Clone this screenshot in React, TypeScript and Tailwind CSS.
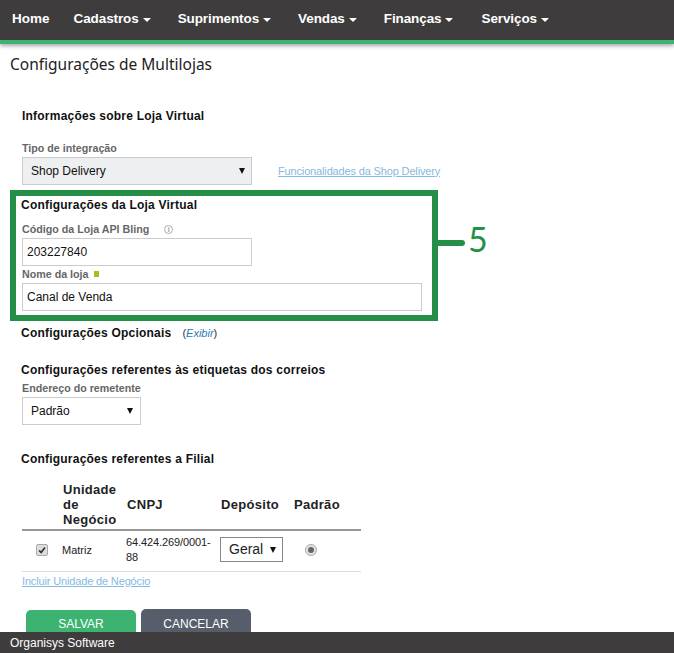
import type { ReactNode } from "react";

const sans = "font-['Liberation_Sans',Arial,sans-serif]";

function Caret() {
  return <span className="ml-[4px] inline-block h-0 w-0 border-x-[4px] border-t-[4px] border-x-transparent border-t-white align-middle" />;
}

function NavItem({ label, className }: { label: string; className: string }) {
  return (
    <span className={`text-[13.5px] font-bold tracking-[-0.1px] text-white whitespace-nowrap ${className}`}>
      {label}
      <Caret />
    </span>
  );
}

function SectionTitle({ children, className = "" }: { children: ReactNode; className?: string }) {
  return <h3 className={`text-[12px] font-bold text-[#111] tracking-[0.22px] leading-[16px] ${className}`}>{children}</h3>;
}

function FieldLabel({ children }: { children: ReactNode }) {
  return <div className="text-[10.7px] font-bold text-[#666] leading-[14px]">{children}</div>;
}

function Arrow() {
  return <span className="h-0 w-0 border-x-[3.5px] border-t-[6px] border-x-transparent border-t-[#111]" />;
}

export default function App() {
  return (
    <div className={`flex h-[653px] w-[674px] flex-col overflow-hidden bg-white ${sans}`}>
      <nav className="z-10 flex h-[44px] shrink-0 items-center border-b-[4px] border-[#3cb371] bg-[#3e3c3d] pb-[1px] pl-[12px] shadow-[0_2px_4px_rgba(0,0,0,0.35)]">
        <span className="mr-[24px] text-[13.5px] font-bold text-white">Home</span>
        <NavItem label="Cadastros" className="mr-[27px]" />
        <NavItem label="Suprimentos" className="mr-[27px]" />
        <NavItem label="Vendas" className="mr-[27px]" />
        <NavItem label="Finanças" className="mr-[28px]" />
        <NavItem label="Serviços" className="" />
      </nav>

      <main className="relative min-h-0 flex-1 overflow-hidden">
        <h1 className="ml-[10px] mt-[10px] font-['Noto_Sans',sans-serif] text-[15.5px] leading-[20px] text-[#222]">
          Configurações de Multilojas
        </h1>

        <div className="ml-[22px] mt-[34px]">
          <SectionTitle>Informações sobre Loja Virtual</SectionTitle>

          <div className="mt-[17px]">
            <FieldLabel>Tipo de integração</FieldLabel>
          </div>
          <div className="mt-[2px] flex items-center">
            <div className="flex h-[28px] w-[230px] items-center justify-between border border-[#ccc] bg-[#eeeff0] pl-[8px] pr-[6px] text-[12px] text-[#111]">
              Shop Delivery
              <Arrow />
            </div>
            <a className="ml-[26px] text-[11px] tracking-[-0.15px] text-[#85b9e0] underline">Funcionalidades da Shop Delivery</a>
          </div>

          <SectionTitle className="-ml-[1px] mt-[12px]">Configurações da Loja Virtual</SectionTitle>

          <div className="mt-[9px] flex items-center">
            <FieldLabel>Código da Loja API Bling</FieldLabel>
            <span className="ml-[15px] flex h-[9px] w-[9px] items-center justify-center rounded-full border border-[#aaa] text-[7px] font-bold leading-none text-[#999]">i</span>
          </div>
          <div className="mt-[2px] flex h-[28px] w-[230px] items-center border border-[#ccc] pl-[4px] text-[12px] text-[#111]">203227840</div>

          <div className="mt-[1px] flex items-center">
            <FieldLabel>Nome da loja</FieldLabel>
            <span className="ml-[5px] h-[6px] w-[5px] bg-[#a4c21f]" />
          </div>
          <div className="mt-[2px] flex h-[28px] w-[400px] items-center border border-[#ccc] pl-[4px] text-[12px] text-[#111]">Canal de Venda</div>

          <div className="-ml-[1px] mt-[14px] flex items-center">
            <SectionTitle>Configurações Opcionais</SectionTitle>
            <span className="ml-[11px] text-[11px] text-[#333]">
              (<a className="italic text-[#2a7ab8]">Exibir</a>)
            </span>
          </div>

          <SectionTitle className="-ml-[1px] mt-[20px]">Configurações referentes às etiquetas dos correios</SectionTitle>
          <div className="mt-[3px]">
            <FieldLabel>Endereço do remetente</FieldLabel>
          </div>
          <div className="mt-[2px] flex h-[28px] w-[119px] items-center justify-between border border-[#ccc] pl-[8px] pr-[7px] text-[12px] text-[#111]">
            Padrão
            <Arrow />
          </div>

          <SectionTitle className="-ml-[1px] mt-[26px]">Configurações referentes a Filial</SectionTitle>

          <table className="mt-[15px] w-[339px] table-fixed border-collapse text-left">
            <thead>
              <tr className="border-b-2 border-[#999] text-[13px] font-bold leading-[15px] tracking-[0.3px] text-[#222]">
                <th className="w-[41px]" />
                <th className="w-[64px] pb-[2px] font-bold">Unidade de Negócio</th>
                <th className="w-[94px] pb-[2px] font-bold">CNPJ</th>
                <th className="w-[73px] pb-[2px] font-bold">Depósito</th>
                <th className="pb-[2px] font-bold">Padrão</th>
              </tr>
            </thead>
            <tbody>
              <tr className="h-[42px] border-b border-[#ddd] text-[11px] text-[#222] [&>td]:pb-[2px]">
                <td>
                  <span className="ml-[14px] flex h-[12px] w-[12px] items-center justify-center rounded-[2px] border border-[#aaa] bg-[#ddd]">
                    <svg viewBox="0 0 12 12" className="h-[10px] w-[10px]" fill="none" stroke="#333" strokeWidth="2">
                      <path d="M2.5 6.5 5 9l4.5-6" />
                    </svg>
                  </span>
                </td>
                <td className="-translate-x-[1px]">Matriz</td>
                <td className="-translate-x-[1px] leading-[15px] tracking-[-0.1px]">64.424.269/0001-88</td>
                <td>
                  <div className="-ml-[1px] flex h-[25px] w-[63px] items-center justify-between border border-[#888] pl-[8px] pr-[6px] text-[14px]">
                    Geral
                    <Arrow />
                  </div>
                </td>
                <td>
                  <span className="ml-[11px] flex h-[12px] w-[12px] items-center justify-center rounded-full border border-[#aaa] bg-[#e4e4e4]">
                    <span className="h-[6px] w-[6px] rounded-full bg-[#666]" />
                  </span>
                </td>
              </tr>
            </tbody>
          </table>

          <a className="mt-[2px] block text-[11px] leading-[14px] tracking-[-0.15px] text-[#85b9e0] underline">Incluir Unidade de Negócio</a>

          <div className="ml-[4px] mt-[21px] flex items-start gap-[5px]">
            <button className="mt-[1px] h-[40px] w-[110px] rounded-[5px] bg-[#3cb371] pb-[12px] text-[12px] text-white">SALVAR</button>
            <button className="h-[40px] w-[110px] rounded-[5px] bg-[#565d6b] pb-[10px] text-[12px] text-white">CANCELAR</button>
          </div>
        </div>

        {/* annotation over the screenshot */}
        <div className="absolute left-[10px] top-[146px] h-[131px] w-[428px] border-[6px] border-[#258f47]" />
        <div className="absolute left-[438px] top-[196px] h-[6px] w-[27px] rounded-r-full bg-[#258f47]" />
        <span className="absolute left-[468px] top-[172px] font-['Lato',sans-serif] text-[34px] leading-[46px] text-[#258f47]">5</span>
      </main>

      <footer className="z-10 flex h-[21px] shrink-0 items-center bg-[#3e3c3d] pl-[10px] text-[12px] text-white">
        Organisys Software
      </footer>
    </div>
  );
}
